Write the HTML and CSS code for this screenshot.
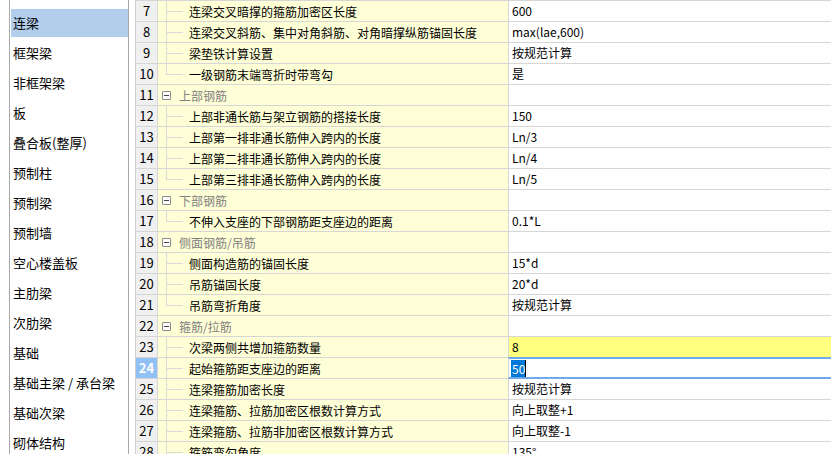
FILE: index.html
```html
<!DOCTYPE html>
<html>
<head>
  <meta charset="utf-8">
  <title>计算设置</title>
  <link rel="stylesheet" href="styles.css">
</head>
<body>
  <div class="app">
    <ul class="nav">
      <li class="active">连梁</li>
      <li>框架梁</li>
      <li>非框架梁</li>
      <li>板</li>
      <li>叠合板(整厚)</li>
      <li>预制柱</li>
      <li>预制梁</li>
      <li>预制墙</li>
      <li>空心楼盖板</li>
      <li>主肋梁</li>
      <li>次肋梁</li>
      <li>基础</li>
      <li>基础主梁 / 承台梁</li>
      <li>基础次梁</li>
      <li>砌体结构</li>
    </ul>

    <div class="grid">
      <div class="row"><span class="num">7</span><span class="name"><i class="branch"></i>连梁交叉暗撑的箍筋加密区长度</span><span class="val">600</span></div>
      <div class="row"><span class="num">8</span><span class="name"><i class="branch"></i>连梁交叉斜筋、集中对角斜筋、对角暗撑纵筋锚固长度</span><span class="val">max(lae,600)</span></div>
      <div class="row"><span class="num">9</span><span class="name"><i class="branch"></i>梁垫铁计算设置</span><span class="val">按规范计算</span></div>
      <div class="row"><span class="num">10</span><span class="name"><i class="branch last"></i>一级钢筋末端弯折时带弯勾</span><span class="val">是</span></div>

      <div class="row"><span class="num">11</span><span class="name group"><i class="toggle"></i>上部钢筋</span><span class="val"></span></div>
      <div class="row"><span class="num">12</span><span class="name"><i class="branch"></i>上部非通长筋与架立钢筋的搭接长度</span><span class="val">150</span></div>
      <div class="row"><span class="num">13</span><span class="name"><i class="branch"></i>上部第一排非通长筋伸入跨内的长度</span><span class="val">Ln/3</span></div>
      <div class="row"><span class="num">14</span><span class="name"><i class="branch"></i>上部第二排非通长筋伸入跨内的长度</span><span class="val">Ln/4</span></div>
      <div class="row"><span class="num">15</span><span class="name"><i class="branch last"></i>上部第三排非通长筋伸入跨内的长度</span><span class="val">Ln/5</span></div>

      <div class="row"><span class="num">16</span><span class="name group"><i class="toggle"></i>下部钢筋</span><span class="val"></span></div>
      <div class="row"><span class="num">17</span><span class="name"><i class="branch last"></i>不伸入支座的下部钢筋距支座边的距离</span><span class="val">0.1*L</span></div>

      <div class="row"><span class="num">18</span><span class="name group"><i class="toggle"></i>侧面钢筋/吊筋</span><span class="val"></span></div>
      <div class="row"><span class="num">19</span><span class="name"><i class="branch"></i>侧面构造筋的锚固长度</span><span class="val">15*d</span></div>
      <div class="row"><span class="num">20</span><span class="name"><i class="branch"></i>吊筋锚固长度</span><span class="val">20*d</span></div>
      <div class="row"><span class="num">21</span><span class="name"><i class="branch last"></i>吊筋弯折角度</span><span class="val">按规范计算</span></div>

      <div class="row"><span class="num">22</span><span class="name group"><i class="toggle"></i>箍筋/拉筋</span><span class="val"></span></div>
      <div class="row"><span class="num">23</span><span class="name"><i class="branch"></i>次梁两侧共增加箍筋数量</span><span class="val changed">8</span></div>
      <div class="row"><span class="num current">24</span><span class="name"><i class="branch"></i>起始箍筋距支座边的距离</span><span class="val editing"><span class="selected">50</span><span class="caret"></span></span></div>
      <div class="row"><span class="num">25</span><span class="name"><i class="branch"></i>连梁箍筋加密长度</span><span class="val">按规范计算</span></div>
      <div class="row"><span class="num">26</span><span class="name"><i class="branch"></i>连梁箍筋、拉筋加密区根数计算方式</span><span class="val">向上取整+1</span></div>
      <div class="row"><span class="num">27</span><span class="name"><i class="branch"></i>连梁箍筋、拉筋非加密区根数计算方式</span><span class="val">向上取整-1</span></div>
      <div class="row"><span class="num">28</span><span class="name"><i class="branch"></i>箍筋弯勾角度</span><span class="val">135°</span></div>
    </div>
  </div>
</body>
</html>
```

FILE: styles.css
```css
/* settings grid, light windows-like theme */
body {
  margin: 0;
  font-family: "Noto Sans CJK SC", "Microsoft YaHei", sans-serif;
  font-size: 12px;
  color: #000000;
  background-color: #ffffff;
  overflow: hidden;
}

.app {
  display: flex;
  height: 454px;
}

/* left list of member types */
.nav {
  list-style: none;
  flex-shrink: 0;
  width: 117px;
  margin: 0 0 0 9px;
  padding: 9px 0 0 1px;
  border-left: 1px solid #a9a9a9;
  border-right: 1px solid #a9a9a9;
  font-size: 13px;
}

.nav li {
  height: 28px;
  line-height: 28px;
  margin-bottom: 2px;
  padding-left: 2px;
  white-space: nowrap;
}

.nav li.active {
  background-color: #b3cdec;
}

/* property grid */
.grid {
  flex: 1;
  margin-left: 6px;
  overflow: hidden;
}

.row {
  display: grid;
  grid-template-columns: 22px 351px 1fr;
  height: 21px;
  box-sizing: border-box;
  border-top: 1px solid #d6d6d6;
}

.num {
  border-left: 1px solid #cfcfcf;
  background-color: #f0f0f0;
  text-align: center;
  line-height: 20px;
  font-size: 13px;
}

.num.current {
  background-color: #91c0f5;
  color: #ffffff;
  font-weight: bold;
}

.name {
  display: flex;
  align-items: center;
  border-left: 1px solid #d6d6d6;
  background-color: #ffffd7;
  white-space: nowrap;
}

.name.group {
  color: #808080;
}

/* tree connector lines */
.branch {
  align-self: stretch;
  width: 17px;
  margin: 0 6px 0 8px;
  background:
    linear-gradient(#d9d9d9, #d9d9d9) 0 0 / 1px 100% no-repeat,
    linear-gradient(#d9d9d9, #d9d9d9) 0 10px / 100% 1px no-repeat;
}

.branch.last {
  background-size: 1px 11px, 100% 1px;
}

/* collapse box */
.toggle {
  display: flex;
  align-items: center;
  justify-content: center;
  width: 7px;
  height: 7px;
  margin: 0 8px 0 4px;
  border: 1px solid #8a8a8a;
  border-radius: 1px;
  background-color: #ffffff;
}

.toggle::before {
  content: "";
  width: 5px;
  height: 1px;
  background-color: #444444;
}

.val {
  border-left: 1px solid #d6d6d6;
  padding-left: 3px;
  line-height: 20px;
  white-space: nowrap;
}

.val.changed {
  background-color: #ffff80;
}

.val.editing {
  display: flex;
  align-items: center;
  margin: -1px 0;
  padding-left: 2px;
  border-top: 2px solid #6ea9ea;
  border-bottom: 2px solid #6ea9ea;
  background-color: #ffffff;
}

.selected {
  background-color: #0078d7;
  color: #ffffff;
  line-height: 17px;
  padding-left: 1px;
}

.caret {
  width: 1px;
  height: 17px;
  background-color: #000000;
}
```
